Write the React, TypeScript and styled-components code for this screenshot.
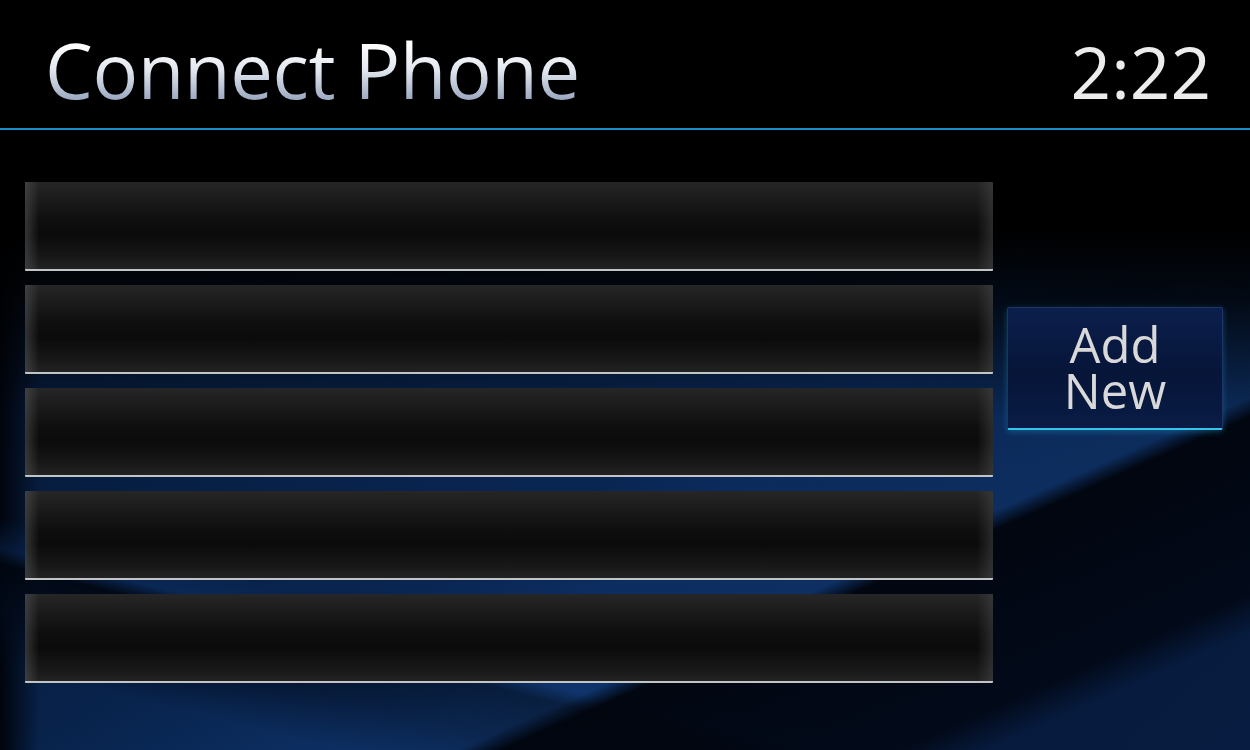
import React from "react";
import styled, { createGlobalStyle } from "styled-components";

const GlobalStyle = createGlobalStyle`
  html, body {
    margin: 0;
    padding: 0;
    background: #000;
  }
  body {
    font-family: "Open Sans", "Noto Sans", sans-serif;
  }
`;

// wallpaper: black top, a blue V that points down to about (574, 700),
// a dark band along its right arm and lighter blue beyond
const Screen = styled.div`
  width: 1250px;
  height: 750px;
  overflow: hidden;
  display: flex;
  flex-direction: column;
  background:
    linear-gradient(to bottom, #000 0px, #000 230px, rgba(0, 0, 0, 0.75) 300px, rgba(0, 0, 0, 0) 420px),
    linear-gradient(156deg,
      rgba(0, 0, 0, 0) 58%,
      rgba(18, 60, 120, 0.4) 70%,
      rgba(22, 68, 132, 0.38) 73%,
      rgba(1, 5, 14, 0.96) 74.5%,
      rgba(2, 8, 22, 0.92) 88%,
      rgba(8, 28, 60, 0.1) 91%,
      rgba(0, 0, 0, 0) 100%),
    linear-gradient(194deg,
      rgba(0, 0, 0, 0) 78%,
      rgba(14, 52, 110, 0.35) 81%,
      rgba(1, 6, 16, 0.9) 82.5%,
      rgba(2, 10, 26, 0.7) 87%,
      rgba(0, 0, 0, 0) 92%),
    linear-gradient(to right, #01040c 0px, rgba(0, 0, 0, 0) 40px),
    linear-gradient(140deg, #04122a 0%, #08234c 45%, #0a2858 62%, #061a3c 85%, #071c40 100%);
`;

const Header = styled.header`
  height: 130px;
  box-sizing: border-box;
  flex: none;
  display: flex;
  align-items: baseline;
  justify-content: space-between;
  padding: 32px 39px 0 45px;
  border-bottom: 2px solid #1a8cc4;
  background: #000;
`;

const Title = styled.h1`
  margin: 0;
  font-family: "Open Sans", "Noto Sans", sans-serif;
  font-weight: 400;
  font-size: 76px;
  letter-spacing: -0.4px;
  line-height: 1;
  background: linear-gradient(to bottom, #ffffff 15%, #e2e7ee 50%, #8797b4 100%);
  -webkit-background-clip: text;
  background-clip: text;
  color: transparent;
`;

const Clock = styled.div`
  font-family: "Open Sans", "Noto Sans", sans-serif;
  font-size: 71px;
  line-height: 1;
  color: #ececec;
`;

const Body = styled.main`
  display: flex;
  align-items: flex-start;
  gap: 14px;
  padding: 52px 0 0 25px;
`;

const List = styled.div`
  width: 968px;
  display: flex;
  flex-direction: column;
  gap: 14px;
`;

const Row = styled.div`
  height: 87px;
  border-bottom: 2px solid #c2c4c6;
  border-radius: 1px;
  background:
    linear-gradient(to right, rgba(84, 86, 88, 0.55) 0px, rgba(40, 40, 40, 0) 14px, rgba(40, 40, 40, 0) calc(100% - 16px), rgba(70, 72, 74, 0.5) 100%),
    linear-gradient(to bottom, #262626 0%, #1c1c1c 18%, #0e0e0e 45%, #0b0b0b 62%, #171717 85%, #222222 100%);
`;

const Side = styled.div`
  padding-top: 125px;
`;

const AddButton = styled.button`
  width: 216px;
  height: 123px;
  border: 1px solid #1c3466;
  border-bottom: 2px solid #38c3ea;
  border-radius: 2px;
  background: linear-gradient(to bottom, #0c1f4c 0%, #061538 55%, #0a1c46 100%);
  box-shadow: 0 2px 6px rgba(40, 190, 240, 0.3);
  padding: 0 0 3px;
  display: flex;
  align-items: center;
  justify-content: center;
  cursor: pointer;
`;

const ButtonLabel = styled.span`
  max-width: 140px;
  text-align: center;
  color: #d9d9d9;
  font-family: "Open Sans", "Noto Sans", sans-serif;
  font-size: 49px;
  line-height: 46px;
`;

const rows = [0, 1, 2, 3, 4];

export default function App() {
  return (
    <>
      <GlobalStyle />
      <Screen>
        <Header>
          <Title>Connect Phone</Title>
          <Clock>2:22</Clock>
        </Header>
        <Body>
          <List>
            {rows.map((r) => (
              <Row key={r} />
            ))}
          </List>
          <Side>
            <AddButton>
              <ButtonLabel>Add New</ButtonLabel>
            </AddButton>
          </Side>
        </Body>
      </Screen>
    </>
  );
}
